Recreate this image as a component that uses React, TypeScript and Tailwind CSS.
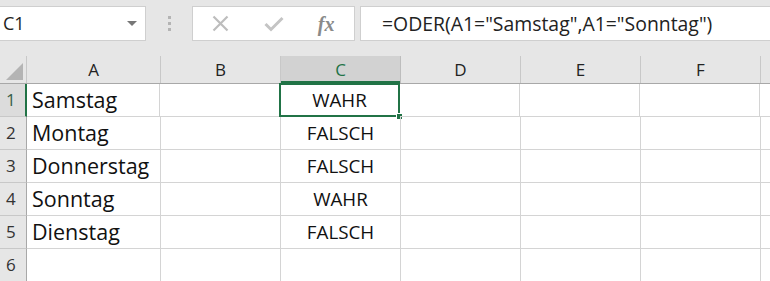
import { ChevronDown } from "lucide-react";

const cols = ["A", "B", "C", "D", "E", "F"];
const widths = [134, 120, 120, 120, 120, 120];

const rows: { a: string; c: string }[] = [
  { a: "Samstag", c: "WAHR" },
  { a: "Montag", c: "FALSCH" },
  { a: "Donnerstag", c: "FALSCH" },
  { a: "Sonntag", c: "WAHR" },
  { a: "Dienstag", c: "FALSCH" },
  { a: "", c: "" },
];

const FormulaBar = () => (
  <div className="flex h-[56px] items-start bg-[#e6e6e6] pt-[6px]">
    {/* Name box */}
    <div className="-ml-px flex h-[35px] w-[147px] items-center justify-between border border-[#cfcfcf] bg-white pl-[3px] pr-[8px]">
      <span className="text-[18px] text-[#222]">C1</span>
      <svg width="10" height="6" viewBox="0 0 10 6">
        <path d="M0 0h10L5 5z" fill="#777" />
      </svg>
    </div>

    {/* grip dots */}
    <div className="flex w-[46px] justify-center pt-[10px]">
      <div className="flex flex-col gap-[3px]">
        <span className="block h-[3px] w-[3px] bg-[#b4b4b4]" />
        <span className="block h-[3px] w-[3px] bg-[#b4b4b4]" />
        <span className="block h-[3px] w-[3px] bg-[#b4b4b4]" />
      </div>
    </div>

    {/* cancel / enter / fx */}
    <div className="flex h-[35px] w-[163px] items-center border border-[#cfcfcf] bg-white">
      <div className="flex w-[54px] justify-center pl-[2px]">
        <svg width="17" height="17" viewBox="0 0 17 17">
          <path d="M1.5 1.5l14 14M15.5 1.5l-14 14" stroke="#bdbdbd" strokeWidth="2.2" />
        </svg>
      </div>
      <div className="flex w-[54px] justify-center">
        <svg width="20" height="16" viewBox="0 0 20 16">
          <path d="M1.5 8l5.5 5.5L18.5 2" stroke="#c4c4c4" strokeWidth="3" fill="none" />
        </svg>
      </div>
      <div className="flex w-[54px] justify-center pr-[2px]">
        <span className="font-['Liberation_Serif',serif] text-[20px] font-bold italic text-[#8a8a8a]">
          fx
        </span>
      </div>
    </div>

    {/* formula */}
    <div className="ml-[5px] flex h-[35px] flex-1 items-center border border-r-0 border-[#cfcfcf] bg-white pl-[21px]">
      <span className="text-[19.4px] text-[#222]">=ODER(A1="Samstag",A1="Sonntag")</span>
    </div>
  </div>
);

const HeaderRow = () => (
  <div className="flex h-[28px] border-b border-[#a8a8a8] bg-[#e6e6e6]">
    <div className="relative w-[27px] shrink-0 border-r border-[#c8c8c8]">
      <svg className="absolute bottom-[3px] right-[3px]" width="17" height="17" viewBox="0 0 17 17">
        <path d="M17 0v17H0z" fill="#b4b4b4" />
      </svg>
    </div>
    {cols.map((c, i) => (
      <div
        key={c}
        style={{ width: widths[i] }}
        className={`flex shrink-0 items-center justify-center border-r text-[17px] ${
          c === "C"
            ? "border-[#bdbdbd] bg-[#d2d2d2] text-[#217346] shadow-[inset_0_-2px_0_#217346]"
            : "border-[#c8c8c8] text-[#222]"
        }`}
      >
        {c}
      </div>
    ))}
    <div className="flex-1" />
  </div>
);

export default function App() {
  return (
    <div className="h-[281px] w-[770px] overflow-hidden bg-white font-['Open_Sans','Noto_Sans',sans-serif]">
      <FormulaBar />
      <HeaderRow />
      {rows.map((r, idx) => (
        <div key={idx} className="flex h-[33px]">
          <div
            className={`flex w-[27px] shrink-0 items-center border-b pl-[6px] text-[17px] ${
              idx === 0
                ? "border-[#c8c8c8] border-r-2 border-r-[#217346] bg-[#dcdcdc] text-[#3a5f4a]"
                : "border-[#c8c8c8] border-r border-r-[#a8a8a8] bg-[#e6e6e6] text-[#333]"
            }`}
          >
            {idx + 1}
          </div>
          {cols.map((c, i) => (
            <div
              key={c}
              style={{ width: i === 0 && idx === 0 ? 133 : widths[i] }}
              className={`relative flex shrink-0 items-center border-b border-r border-[#d4d4d4] ${
                c === "C" ? "justify-center" : "pl-[5px]"
              }`}
            >
              {c === "A" && <span className="text-[21.5px] text-[#111]">{r.a}</span>}
              {c === "C" && <span className="text-[18.8px] text-[#111]">{r.c}</span>}
              {c === "C" && idx === 0 && (
                <>
                  <div className="absolute -left-px -top-px bottom-[-1px] right-[-1px] border-2 border-[#217346]" />
                  <div className="absolute bottom-[-4px] right-[-4px] h-[7px] w-[7px] border border-white bg-[#217346]" />
                </>
              )}
            </div>
          ))}
          <div className="flex-1 border-b border-[#d4d4d4]" />
        </div>
      ))}
    </div>
  );
}
